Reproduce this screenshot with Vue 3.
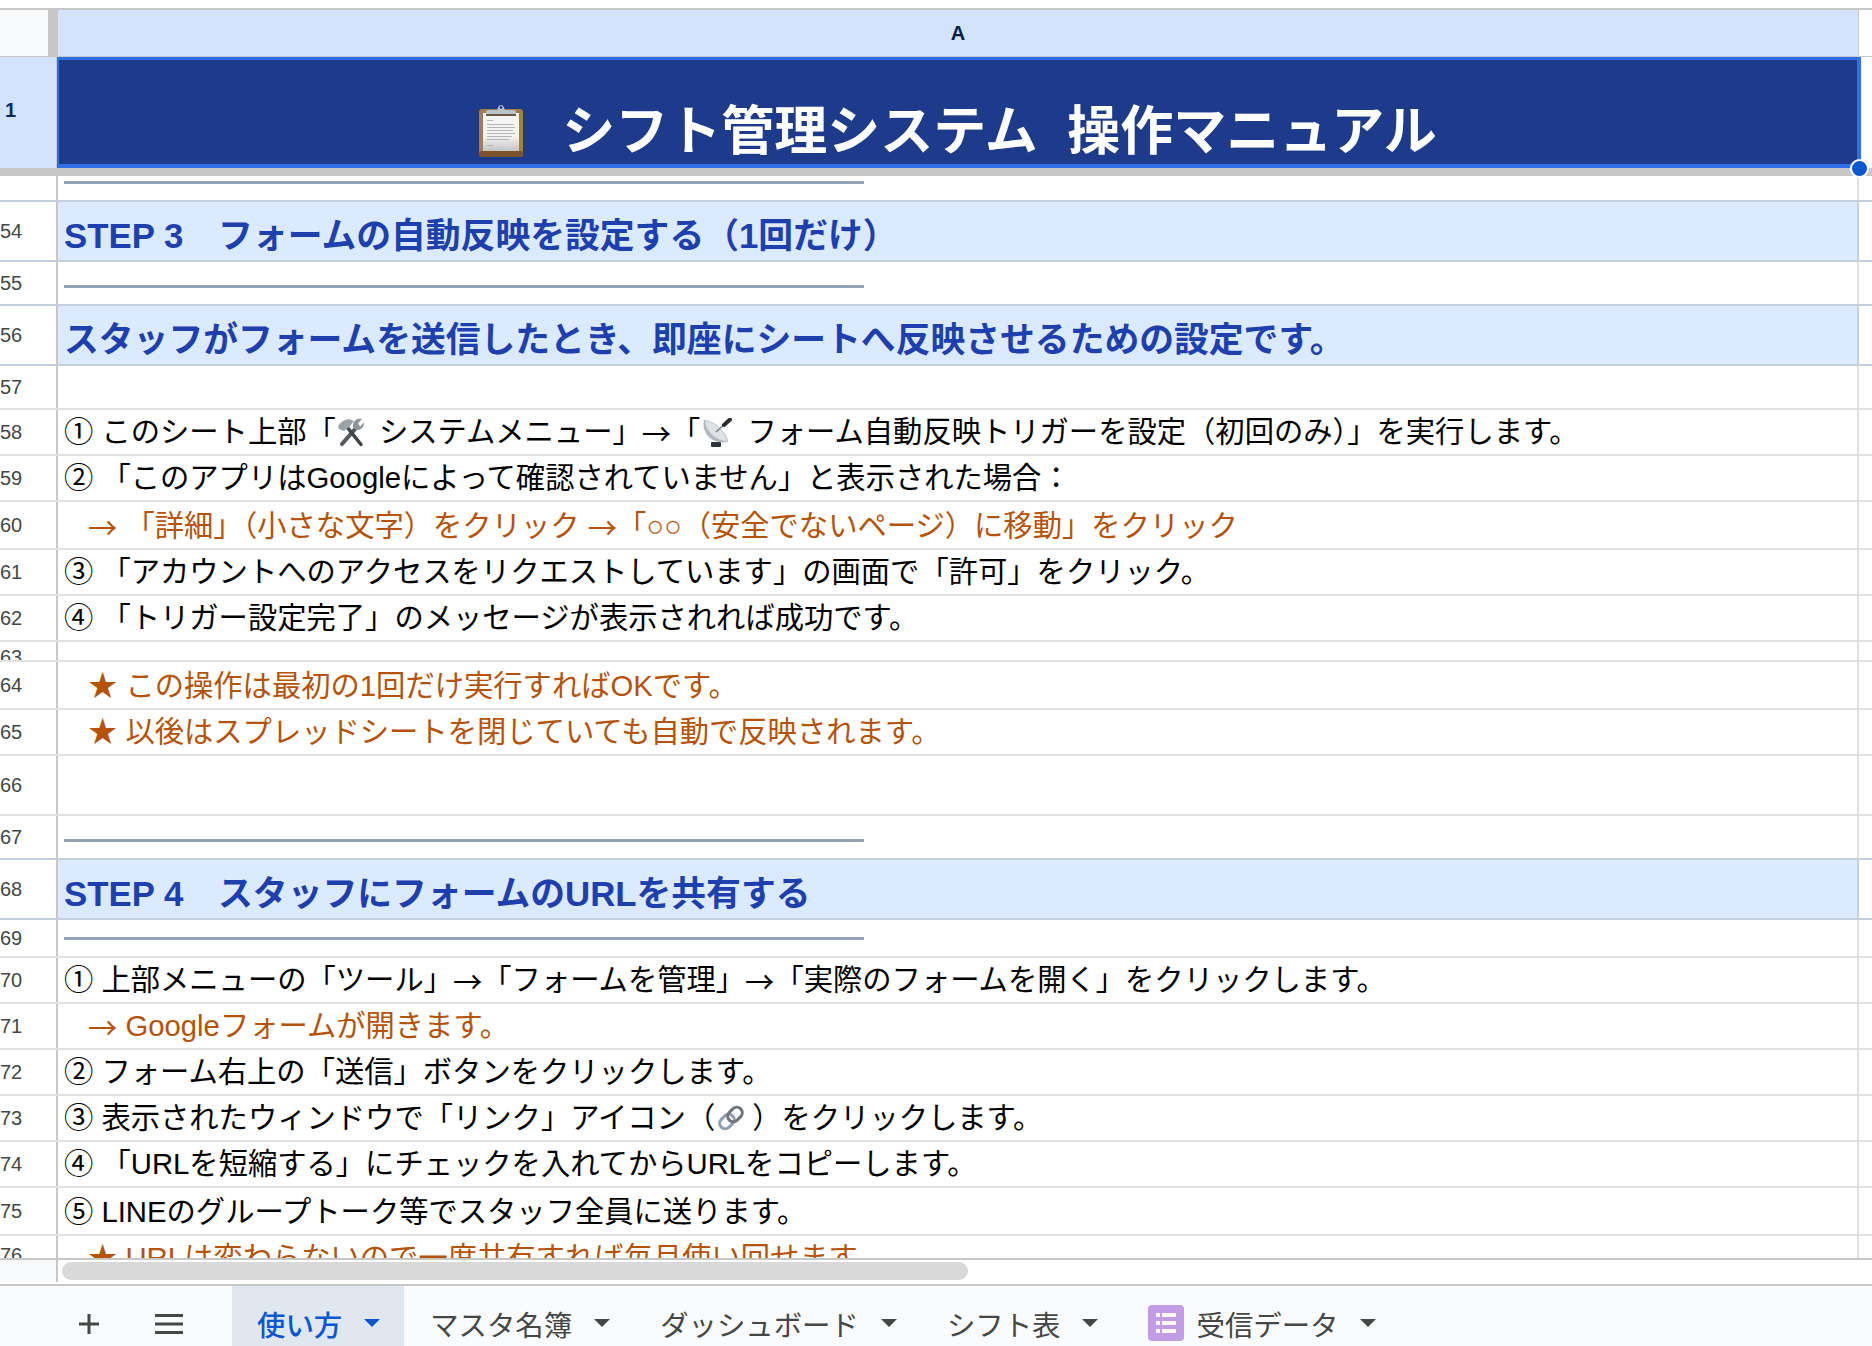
<template>
  <div class="sheet">
    <div class="topgap"></div>

    <div class="colhead">
      <div class="corner"></div>
      <div class="freeze"></div>
      <div class="col-a">A</div>
    </div>

    <div class="frozen">
      <div class="rn-first">1</div>
      <div class="title-cell">
        <svg class="clipboard" viewBox="0 0 44 53" width="44" height="53">
          <defs>
            <linearGradient id="paper" x1="0" y1="0" x2="0" y2="1">
              <stop offset="0.6" stop-color="#f4f4f4" />
              <stop offset="1" stop-color="#c4c4c4" />
            </linearGradient>
          </defs>
          <rect x="0" y="5" width="44" height="48" rx="3" fill="#a97c45" />
          <rect x="0" y="47" width="44" height="6" rx="2" fill="#7a5428" />
          <rect x="4" y="9" width="36" height="38" fill="url(#paper)" />
          <g fill="#b5b5b5">
            <rect x="8" y="16" width="6" height="1" />
            <rect x="8" y="20" width="27" height="1" />
            <rect x="8" y="23" width="28" height="1" />
            <rect x="8" y="26" width="26" height="1" />
            <rect x="8" y="29" width="28" height="1" />
            <rect x="8" y="32" width="25" height="1" />
            <rect x="8" y="35" width="22" height="1" />
            <rect x="8" y="41" width="6" height="1" />
          </g>
          <path d="M7 11 V8 Q7 6 10 6 H18 Q19 5 19 3 Q22 -1 25 3 Q25 5 26 6 H34 Q37 6 37 8 V11 Z" fill="#b9c3cd" />
          <rect x="7" y="10" width="30" height="2" fill="#6b5a48" />
          <circle cx="22" cy="3.4" r="1.4" fill="#1e3a8a" />
        </svg>
        <span class="title-text">{{ title }}</span>
      </div>
      <div class="handle"></div>
    </div>
    <div class="freeze-band"></div>

    <div class="grid">
      <div
        v-for="(row, i) in sheetRows"
        :key="i"
        class="row"
        :class="row.kind"
        :style="{ height: row.h + 'px' }"
      >
        <div class="rn" :style="row.numPad">{{ row.n }}</div>
        <div class="cell">
          <div v-if="row.kind === 'line'" class="divider" :style="{ marginBottom: row.lineGap + 'px' }"></div>
          <div v-else-if="row.parts" class="text">
            <template v-for="(part, j) in row.parts" :key="j">
              <svg v-if="part === 'tools'" class="emoji" viewBox="0 0 28 29" width="28" height="29">
                <path d="M5 26 L19 10" stroke="#54585c" stroke-width="4" stroke-linecap="round" />
                <path d="M16 9 A7 7 0 0 1 25 1 L21 5.500 L23 8.500 L27 4.500 A7 7 0 0 1 19 12 Z" fill="#8d949b" />
                <path d="M24 26.500 L10 9" stroke="#3f4347" stroke-width="3.500" stroke-linecap="round" />
                <path d="M2 11 L1 8 Q5 2 12 1 L17 3 L12 9 L7 13 Z" fill="#9ca2a8" />
              </svg>
              <svg v-else-if="part === 'dish'" class="emoji" viewBox="0 0 32 29" width="32" height="29">
                <rect x="10" y="24" width="10" height="5" rx="1" fill="#2d333a" />
                <path d="M3 2 C0 14 10 27 27 24 C26 14 14 3 3 2 Z" fill="#b4b9be" />
                <path d="M4 3 C5 13 14 22 26 23.500 C25 14 14 4 4 3 Z" fill="#dfe2e5" />
                <path d="M15 14 L24 6" stroke="#7b8086" stroke-width="1.500" />
                <path d="M23 7 L29 1.500" stroke="#2b2f33" stroke-width="4" stroke-linecap="round" />
              </svg>
              <svg v-else-if="part === 'link'" class="emoji" viewBox="0 0 30 30" width="30" height="30">
                <rect x="3" y="13" width="16" height="11" rx="5.500" transform="rotate(-45 11 18.500)" fill="none" stroke="#8f9eae" stroke-width="3" />
                <rect x="11" y="6" width="16" height="11" rx="5.500" transform="rotate(-45 19 11.500)" fill="none" stroke="#6f7479" stroke-width="3" />
              </svg>
              <span v-else-if="part === '→'" class="arrow">→</span>
              <span v-else>{{ part }}</span>
            </template>
          </div>
        </div>
      </div>
    </div>

    <div class="scroll-strip">
      <div class="strip-head"></div>
      <div class="thumb"></div>
    </div>
    <div class="strip-gap"></div>

    <div class="tabbar">
      <div class="tool-plus">
        <svg viewBox="0 0 20 20" width="20" height="20">
          <path d="M10 0 V20 M0 10 H20" stroke="#444746" stroke-width="3" />
        </svg>
      </div>
      <div class="tool-menu">
        <svg viewBox="0 0 28 20" width="28" height="20">
          <path d="M0 1.500 H28 M0 10 H28 M0 18.500 H28" stroke="#444746" stroke-width="3" />
        </svg>
      </div>
      <div
        v-for="tab in tabs"
        :key="tab.name"
        class="tab"
        :class="{ active: tab.active }"
      >
        <svg v-if="tab.form" class="form-icon" viewBox="0 0 36 36" width="36" height="36">
          <rect width="36" height="36" rx="4" fill="#c39ce8" />
          <g fill="#fff">
            <rect x="8" y="8" width="4" height="4" />
            <rect x="14" y="8" width="14" height="4" />
            <rect x="8" y="16" width="4" height="4" />
            <rect x="14" y="16" width="14" height="4" />
            <rect x="8" y="24" width="4" height="4" />
            <rect x="14" y="24" width="14" height="4" />
          </g>
        </svg>
        <span class="tab-name">{{ tab.name }}</span>
        <span class="caret"></span>
      </div>
    </div>
  </div>
</template>

<script setup>
const title = 'シフト管理システム  操作マニュアル'

const rows = [
  { h: 26, kind: 'line', lineGap: 16 },
  { n: 54, h: 60, kind: 'step', parts: ['STEP 3　フォームの自動反映を設定する（1回だけ）'] },
  { n: 55, h: 44, kind: 'line', lineGap: 16 },
  { n: 56, h: 60, kind: 'step', parts: ['スタッフがフォームを送信したとき、即座にシートへ反映させるための設定です。'] },
  { n: 57, h: 44, kind: 'blank' },
  { n: 58, h: 46, kind: 'plain', parts: ['① このシート上部「', 'tools', ' システムメニュー」→「', 'dish', ' フォーム自動反映トリガーを設定（初回のみ）」を実行します。'] },
  { n: 59, h: 46, kind: 'plain', parts: ['② 「このアプリはGoogleによって確認されていません」と表示された場合：'] },
  { n: 60, h: 48, kind: 'orange', parts: ['→ 「詳細」（小さな文字）をクリック →「○○（安全でないページ）に移動」をクリック'] },
  { n: 61, h: 46, kind: 'plain', parts: ['③ 「アカウントへのアクセスをリクエストしています」の画面で「許可」をクリック。'] },
  { n: 62, h: 46, kind: 'plain', parts: ['④ 「トリガー設定完了」のメッセージが表示されれば成功です。'] },
  { n: 63, h: 20, kind: 'blank', numPad: { paddingTop: '12px' } },
  { n: 64, h: 48, kind: 'orange', parts: ['★ この操作は最初の1回だけ実行すればOKです。'] },
  { n: 65, h: 46, kind: 'orange', parts: ['★ 以後はスプレッドシートを閉じていても自動で反映されます。'] },
  { n: 66, h: 60, kind: 'blank' },
  { n: 67, h: 44, kind: 'line', lineGap: 16 },
  { n: 68, h: 60, kind: 'step', parts: ['STEP 4　スタッフにフォームのURLを共有する'] },
  { n: 69, h: 38, kind: 'line', lineGap: 16 },
  { n: 70, h: 46, kind: 'plain', parts: ['① 上部メニューの「ツール」→「フォームを管理」→「実際のフォームを開く」をクリックします。'] },
  { n: 71, h: 46, kind: 'orange', parts: ['→ Googleフォームが開きます。'] },
  { n: 72, h: 46, kind: 'plain', parts: ['② フォーム右上の「送信」ボタンをクリックします。'] },
  { n: 73, h: 46, kind: 'plain', parts: ['③ 表示されたウィンドウで「リンク」アイコン（', 'link', '）をクリックします。'] },
  { n: 74, h: 46, kind: 'plain', parts: ['④ 「URLを短縮する」にチェックを入れてからURLをコピーします。'] },
  { n: 75, h: 48, kind: 'plain', parts: ['⑤ LINEのグループトーク等でスタッフ全員に送ります。'] },
  { n: 76, h: 46, kind: 'orange', numPad: { paddingBottom: '6px' }, parts: ['★ URLは変わらないので一度共有すれば毎月使い回せます'] }
]

// arrows are set in the CJK face, the Latin one draws them too small
const sheetRows = rows.map((row) => ({
  ...row,
  parts: row.parts && row.parts.flatMap((part) => part.split(/(→)/).filter(Boolean))
}))

const tabs = [
  { name: '使い方', active: true },
  { name: 'マスタ名簿' },
  { name: 'ダッシュボード' },
  { name: 'シフト表' },
  { name: '受信データ', form: true }
]
</script>

<style scoped>
.sheet {
  width: 1872px;
  height: 1346px;
  display: flex;
  flex-direction: column;
  overflow: hidden;
  background: #fff;
  font-family: "Liberation Sans", "Noto Sans CJK JP", sans-serif;
  color: #000;
}

.topgap {
  height: 8px;
  flex: none;
}

.colhead {
  height: 49px;
  flex: none;
  box-sizing: border-box;
  display: flex;
  border-top: 2px solid #c7c7c7;
  border-bottom: 1px solid #c7c7c7;
}

.corner {
  width: 48px;
  background: #f8f9fa;
}

.freeze {
  width: 10px;
  background: #c7c7c7;
}

.col-a {
  width: 1801px;
  background: #d3e3fd;
  border-right: 1px solid #c7c7c7;
  box-sizing: border-box;
  display: flex;
  align-items: center;
  justify-content: center;
  font-size: 20px;
  font-weight: 700;
  color: #041e49;
}

.frozen {
  height: 111px;
  flex: none;
  display: flex;
  position: relative;
}

.rn-first {
  width: 57px;
  flex: none;
  background: #d3e3fd;
  border-right: 1px solid #c7c7c7;
  display: flex;
  align-items: center;
  padding: 0 0 4px 5px;
  box-sizing: border-box;
  font-size: 20px;
  font-weight: 700;
  color: #0a2a5c;
}

.title-cell {
  width: 1804px;
  flex: none;
  box-sizing: border-box;
  background: #1e3a8a;
  border: solid #2f6fe8;
  border-width: 3px 4px 4px 2px;
  display: flex;
  align-items: flex-end;
  justify-content: center;
  color: #fff;
}

.clipboard {
  flex: none;
  margin: 0 39px 7px 0;
}

.title-text {
  font-size: 53px;
  font-weight: 700;
  line-height: 64px;
  white-space: pre;
}

.handle {
  position: absolute;
  left: 1850px;
  top: 102px;
  width: 15px;
  height: 15px;
  border-radius: 50%;
  background: #0b57d0;
  border: 2px solid #fff;
}

.freeze-band {
  height: 8px;
  flex: none;
  background: #c7c7c7;
}

.grid {
  height: 1082px;
  flex: none;
  overflow: hidden;
}

.row {
  display: flex;
  box-sizing: border-box;
  border-bottom: 2px solid #e1e1e1;
  overflow: hidden;
}

.row.step {
  border-bottom-color: #c5d0df;
  box-shadow: 0 -2px 0 #c5d0df;
}

.rn {
  width: 58px;
  flex: none;
  box-sizing: border-box;
  border-right: 2px solid #c7c7c7;
  display: flex;
  align-items: center;
  font-size: 20px;
  line-height: 28px;
  color: #444746;
  white-space: nowrap;
}

.cell {
  width: 1801px;
  flex: none;
  box-sizing: border-box;
  border-right: 2px solid #e1e1e1;
  display: flex;
  align-items: flex-end;
  padding-left: 6px;
  overflow: hidden;
}

.step .cell {
  background: #dbeafe;
  border-right-color: #c5d0df;
}

.text {
  white-space: pre;
  font-size: 29.300px;
  line-height: 36px;
  padding-bottom: 4px;
  display: flex;
  align-items: center;
}

.step .text {
  font-size: 34.800px;
  font-weight: 700;
  line-height: 44px;
  padding-bottom: 2px;
  color: #1e40af;
}

.orange .text {
  color: #b45309;
  padding-left: 24px;
}

.arrow {
  font-family: "Noto Sans CJK JP", sans-serif;
}

.divider {
  width: 800px;
  height: 3px;
  background: #94a3b8;
}

.emoji {
  flex: none;
  margin: 0 6px 0 1px;
}

.scroll-strip {
  height: 24px;
  flex: none;
  box-sizing: border-box;
  border-top: 2px solid #c7c7c7;
  display: flex;
}

.strip-head {
  width: 58px;
  flex: none;
  box-sizing: border-box;
  background: #f8f9fa;
  border-right: 2px solid #c7c7c7;
}

.thumb {
  width: 906px;
  height: 18px;
  margin: 2px 0 0 4px;
  border-radius: 9px;
  background: #d9d9d9;
}

.strip-gap {
  height: 2px;
  flex: none;
}

.tabbar {
  height: 62px;
  flex: none;
  box-sizing: border-box;
  border-top: 2px solid #c7c7c7;
  background: #f9fbfd;
  display: flex;
  align-items: stretch;
}

.tool-plus {
  margin: 28px 0 0 79px;
  height: 20px;
  line-height: 0;
}

.tool-menu {
  margin: 28px 0 0 56px;
  height: 20px;
  line-height: 0;
}

.tab {
  display: flex;
  align-items: center;
  padding: 14px 24px 0 26px;
  height: 60px;
  box-sizing: border-box;
  font-size: 28.400px;
  color: #444746;
  white-space: nowrap;
}

.tab.active {
  background: #e0e7ef;
  color: #0b57d0;
  font-weight: 500;
  margin-left: 49px;
  padding-left: 25px;
  padding-right: 24px;
}

.form-icon {
  flex: none;
  margin-right: 12px;
}

.caret {
  width: 0;
  height: 0;
  margin-left: 22px;
  border-left: 8px solid transparent;
  border-right: 8px solid transparent;
  border-top: 8px solid #444746;
}

.active .caret {
  border-top-color: #0b57d0;
}
</style>

<style>
html,
body {
  margin: 0;
  background: #fff;
}
</style>
